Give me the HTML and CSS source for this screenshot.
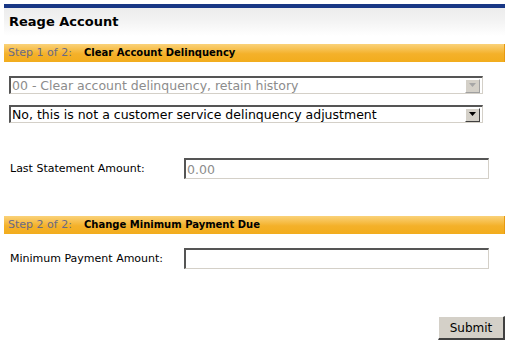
FILE: index.html
```html
<!DOCTYPE html>
<html lang="en">
<head>
    <meta charset="UTF-8">
    <title>Reage Account</title>
    <link rel="stylesheet" href="styles.css">
</head>
<body>
    <div class="panel">
        <div class="panel-top"></div>
        <div class="panel-head">Reage Account</div>

        <div class="step">
            <span class="step-num">Step 1 of 2:</span>
            <span class="step-title">Clear Account Delinquency</span>
        </div>

        <div class="selects">
            <div class="combo disabled">
                <select class="combo-input" disabled>
                    <option>00 - Clear account delinquency, retain history</option>
                </select>
                <span class="combo-arrow">
                    <svg width="9" height="5" viewBox="0 0 9 5"><path d="M1 0h7L4.5 4z" fill="#a6a6a6"/></svg>
                </span>
            </div>
            <div class="combo">
                <select class="combo-input">
                    <option>No, this is not a customer service delinquency adjustment</option>
                    <option>Yes, this is a customer service delinquency adjustment</option>
                </select>
                <span class="combo-arrow">
                    <svg width="9" height="5" viewBox="0 0 9 5"><path d="M1 0h7L4.5 4z" fill="#000"/></svg>
                </span>
            </div>
        </div>

        <div class="field first">
            <label for="lastAmt">Last Statement Amount:</label>
            <input type="text" id="lastAmt" class="text-input readonly" value="0.00" readonly>
        </div>

        <div class="step">
            <span class="step-num">Step 2 of 2:</span>
            <span class="step-title">Change Minimum Payment Due</span>
        </div>

        <div class="field">
            <label for="minAmt">Minimum Payment Amount:</label>
            <input type="text" id="minAmt" class="text-input">
        </div>

        <div class="actions">
            <button class="btn">Submit</button>
        </div>
    </div>
</body>
</html>
```

FILE: styles.css
```css
body {
    font-family: "DejaVu Sans", Verdana, sans-serif;
    background-color: #fff;
    margin: 0;
    padding: 4px 3px 0 4px;
}

.panel {
    width: 501px;
}

.panel-top {
    height: 4px;
    background-color: #183785;
}

.panel-head {
    height: 28px;
    line-height: 27px;
    padding-left: 5px;
    font-size: 13px;
    font-weight: bold;
    color: #000;
    background: linear-gradient(#ececec, #f2f2f2 40%, #fff);
    margin-bottom: 8px;
}

.step {
    height: 18px;
    line-height: 18px;
    padding-left: 4px;
    font-size: 10px;
    background: linear-gradient(#fad27a, #f4b12a 55%, #f2ad1d);
    border-right: 1px solid #e89a10;
}

.step-num {
    font-size: 11px;
    color: #6a6a84;
    margin-right: 9px;
}

.step-title {
    font-weight: bold;
    color: #000;
}

.selects {
    display: flex;
    flex-direction: column;
    gap: 11px;
    padding: 14px 0 0 5px;
}

.combo {
    display: flex;
    align-items: center;
    width: 471px;
    height: 15px;
    border-top: 2px solid #555;
    border-left: 2px solid #555;
    border-right: 1px solid #d4d0c8;
    border-bottom: 1px solid #d4d0c8;
    background-color: #fff;
}

.combo-input {
    flex: 1;
    appearance: none;
    border: none;
    outline: none;
    background: transparent;
    font-family: "DejaVu Sans", Verdana, sans-serif;
    font-size: 12.5px;
    color: #000;
    padding: 0 0 0 1px;
    height: 15px;
    line-height: 15px;
}

.combo.disabled .combo-input {
    color: #8c8c8c;
    opacity: 1;
}

.combo-arrow {
    display: flex;
    align-items: center;
    justify-content: center;
    width: 13px;
    height: 12px;
    margin-right: 2px;
    background-color: #d4d0c8;
    border-top: 1px solid #fff;
    border-left: 1px solid #fff;
    border-right: 1px solid #404040;
    border-bottom: 1px solid #404040;
}

.combo.disabled .combo-arrow {
    border-right-color: #a0a0a0;
    border-bottom-color: #a0a0a0;
}

.field {
    display: flex;
    align-items: center;
    padding-left: 6px;
    font-size: 11px;
    color: #000;
}

.field.first {
    margin: 35px 0 37px;
}

.field:not(.first) {
    margin-top: 14px;
}

.field label {
    width: 174px;
}

.text-input {
    box-sizing: border-box;
    width: 305px;
    height: 21px;
    border-top: 2px solid #555;
    border-left: 2px solid #555;
    border-right: 1px solid #d4d0c8;
    border-bottom: 1px solid #d4d0c8;
    padding: 0 1px;
    font-family: "DejaVu Sans", Verdana, sans-serif;
    font-size: 12.5px;
    outline: none;
}

.text-input.readonly {
    color: #8c8c8c;
}

.actions {
    display: flex;
    justify-content: flex-end;
    margin-top: 47px;
}

.btn {
    width: 67px;
    height: 24px;
    padding: 0;
    font-family: "DejaVu Sans", Verdana, sans-serif;
    font-size: 12px;
    color: #000;
    background-color: #d4d0c8;
    border-top: 1px solid #fff;
    border-left: 1px solid #fff;
    border-right: 2px solid #404040;
    border-bottom: 2px solid #404040;
    cursor: pointer;
}
```
